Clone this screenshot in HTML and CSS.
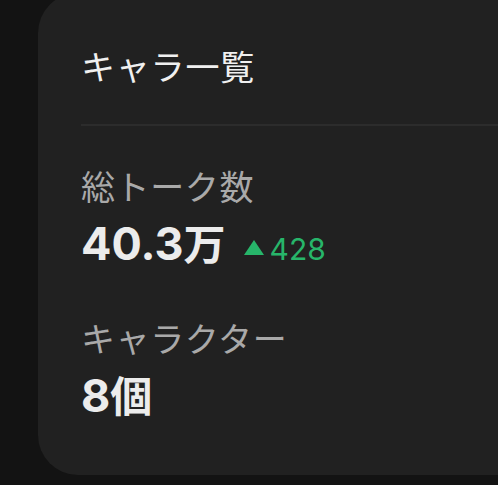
FILE: index.html
```html
<!DOCTYPE html>
<html lang="ja">
<head>
<meta charset="utf-8">
<link rel="stylesheet" href="styles.css">
</head>
<body>
<div class="page">
  <section class="card">
    <h2 class="title">キャラ一覧</h2>
    <div class="divider"></div>
    <div class="stat stat-first">
      <div class="label">総トーク数</div>
      <div class="value-row">
        <span class="value"><span class="num">40.3</span>万</span>
        <span class="delta"><svg class="tri" width="20" height="15" viewBox="0 0 20 15"><path d="M10 0 L20 15 L0 15 Z" fill="#27b56a"/></svg>428</span>
      </div>
    </div>
    <div class="stat stat-next">
      <div class="label">キャラクター</div>
      <div class="value-row">
        <span class="value"><span class="num">8</span>個</span>
      </div>
    </div>
  </section>
</div>
</body>
</html>
```
FILE: styles.css
```css
html, body {
  margin: 0;
  padding: 0;
  background: #131313;
  overflow: hidden;
}
body {
  width: 498px;
  height: 485px;
  font-family: "Noto Sans CJK JP", "Noto Sans", sans-serif;
}
.page {
  padding-left: 38px;
  margin-top: -7px;
}
.card {
  width: 460px;
  height: 482px;
  box-sizing: border-box;
  background: #212121;
  border-radius: 40px 0 0 40px;
  padding: 56px 0 0 43px;
  display: flex;
  flex-direction: column;
}
.title {
  margin: 0;
  font-size: 34px;
  line-height: 34px;
  font-weight: 400;
  letter-spacing: 0.8px;
  color: #f0f0f0;
}
.divider {
  height: 2px;
  background: #2c2c2c;
  margin-top: 41px;
}
.stat {
  display: flex;
  flex-direction: column;
}
.stat-first { margin-top: 43px; }
.stat-next { margin-top: 54px; }
.label {
  font-size: 34px;
  line-height: 34px;
  letter-spacing: 0.6px;
  color: #a9a9a9;
  font-weight: 400;
}
.value-row {
  display: flex;
  align-items: baseline;
  gap: 18px;
  margin-top: 17px;
}
.value {
  font-size: 42px;
  line-height: 44px;
  font-weight: 700;
  color: #ececec;
}
.num {
  font-family: Inter, "Noto Sans", sans-serif;
  font-size: 45px;
}
.delta {
  font-size: 30px;
  color: #27b56a;
  font-weight: 400;
  font-family: Inter, "Noto Sans", sans-serif;
  display: flex;
  align-items: baseline;
}
.tri {
  margin-right: 6px;
  margin-bottom: 3px;
  align-self: center;
}
```
